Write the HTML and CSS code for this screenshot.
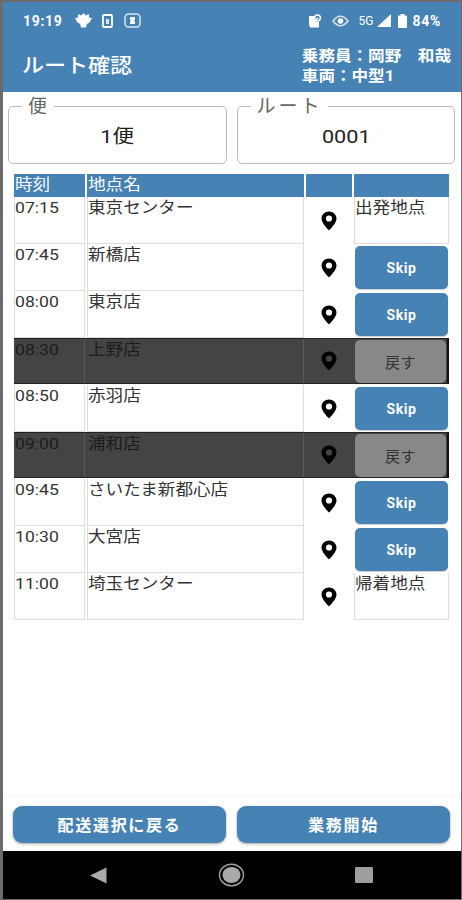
FILE: index.html
```html
<!DOCTYPE html>
<html lang="ja">
<head>
    <meta charset="UTF-8">
    <meta name="viewport" content="width=device-width, initial-scale=1.0">
    <title>ルート確認</title>
    <link rel="stylesheet" href="styles.css">
</head>
<body>
    <!-- 共通アイコン -->
    <svg class="icon-defs" width="0" height="0">
        <symbol id="pin" viewBox="0 0 16 20">
            <path fill-rule="evenodd" d="M8 0.5C3.8 0.5 0.5 3.7 0.5 7.6C0.5 12.5 8 19.5 8 19.5S15.5 12.5 15.5 7.6C15.5 3.7 12.2 0.5 8 0.5ZM8 4.4A3.1 3.1 0 1 1 8 10.6A3.1 3.1 0 1 1 8 4.4Z"/>
        </symbol>
    </svg>

    <div class="screen">
        <header class="header">
            <div class="status-bar">
                <span class="clock">19:19</span>
                <svg class="status-leaf" width="17" height="15" viewBox="0 0 17 15"><path fill="#fff" d="M8.5 0L10.800 2.500L14 1L14 4.500L17 5L14.500 9.500L11.800 11L11 14.500H6L5.200 11L2.500 9.500L0 5L3 4.500L3 1L6.200 2.500Z"/></svg>
                <svg class="status-card" width="11" height="14" viewBox="0 0 11 14"><rect x="1" y="1" width="9" height="12" rx="1" fill="none" stroke="#fff" stroke-width="1.8"/><path fill="#d7e6f2" d="M4 5h3v5H4z"/></svg>
                <svg class="status-box" width="17" height="15" viewBox="0 0 17 15"><rect x="1" y="1" width="15" height="13" rx="3.5" fill="none" stroke="#d7e6f2" stroke-width="1.5"/><path fill="#fff" d="M6 4h5v2.500l-1 1 1 1V11H6V8.500l1-1-1-1z"/></svg>
                <div class="status-right">
                    <svg width="14" height="14" viewBox="0 0 14 14"><path fill="#fff" d="M1 2h5v3l2 3h3v5.5H2L1 10z"/><circle cx="9.5" cy="4" r="2.9" fill="none" stroke="#fff" stroke-width="1.5"/><path d="M6 8l4-4" stroke="#fff" stroke-width="1.4"/></svg>
                    <svg class="status-eye" width="17" height="12" viewBox="0 0 17 12"><path fill="none" stroke="#d4e4f1" stroke-width="1.6" d="M1 6Q8.5-3.5 16 6Q8.5 15.500 1 6Z"/><circle cx="8.5" cy="6" r="2.8" fill="#fff"/></svg>
                    <span class="network">5G</span>
                    <svg class="status-signal" width="14" height="13" viewBox="0 0 14 13"><path fill="#fff" d="M0 13L14 0V13Z"/></svg>
                    <svg class="status-battery" width="9" height="14" viewBox="0 0 9 14"><path fill="#fff" d="M2.500 0h4v1.500H8.300q.7 0 .7.7V13.200q0 .8-.8.8H.8Q0 14 0 13.200V2.200q0-.7.7-.7H2.500z"/></svg>
                    <span class="battery">84%</span>
                </div>
            </div>
            <div class="title-bar">
                <h1 class="title">ルート確認</h1>
                <div class="crew">
                    <div>乗務員：岡野　和哉</div>
                    <div>車両：中型1</div>
                </div>
            </div>
        </header>

        <main class="content">
            <div class="fields">
                <fieldset class="field">
                    <legend class="legend-short">便</legend>
                    <div class="wide-center">1便</div>
                </fieldset>
                <fieldset class="field">
                    <legend class="legend-long">ルート</legend>
                    <div class="wide-center">0001</div>
                </fieldset>
            </div>

            <div class="route">
                <div class="row row-head">
                    <div class="cell"><span class="wide">時刻</span></div>
                    <div class="cell"><span class="wide">地点名</span></div>
                    <div class="cell"></div>
                    <div class="cell"></div>
                </div>
                <div class="row">
                    <div class="cell"><span class="wide">07:15</span></div>
                    <div class="cell"><span class="wide">東京センター</span></div>
                    <div class="map"><svg class="pin"><use href="#pin"/></svg></div>
                    <div class="cell"><span class="wide">出発地点</span></div>
                </div>
                <div class="row">
                    <div class="cell"><span class="wide">07:45</span></div>
                    <div class="cell"><span class="wide">新橋店</span></div>
                    <div class="map"><svg class="pin"><use href="#pin"/></svg></div>
                    <button class="skip-button">Skip</button>
                </div>
                <div class="row">
                    <div class="cell"><span class="wide">08:00</span></div>
                    <div class="cell"><span class="wide">東京店</span></div>
                    <div class="map"><svg class="pin"><use href="#pin"/></svg></div>
                    <button class="skip-button">Skip</button>
                </div>
                <div class="row skipped">
                    <div class="cell"><span class="wide">08:30</span></div>
                    <div class="cell"><span class="wide">上野店</span></div>
                    <div class="map"><svg class="pin"><use href="#pin"/></svg></div>
                    <button class="skip-button">戻す</button>
                </div>
                <div class="row">
                    <div class="cell"><span class="wide">08:50</span></div>
                    <div class="cell"><span class="wide">赤羽店</span></div>
                    <div class="map"><svg class="pin"><use href="#pin"/></svg></div>
                    <button class="skip-button">Skip</button>
                </div>
                <div class="row skipped">
                    <div class="cell"><span class="wide">09:00</span></div>
                    <div class="cell"><span class="wide">浦和店</span></div>
                    <div class="map"><svg class="pin"><use href="#pin"/></svg></div>
                    <button class="skip-button">戻す</button>
                </div>
                <div class="row">
                    <div class="cell"><span class="wide">09:45</span></div>
                    <div class="cell"><span class="wide">さいたま新都心店</span></div>
                    <div class="map"><svg class="pin"><use href="#pin"/></svg></div>
                    <button class="skip-button">Skip</button>
                </div>
                <div class="row">
                    <div class="cell"><span class="wide">10:30</span></div>
                    <div class="cell"><span class="wide">大宮店</span></div>
                    <div class="map"><svg class="pin"><use href="#pin"/></svg></div>
                    <button class="skip-button">Skip</button>
                </div>
                <div class="row">
                    <div class="cell"><span class="wide">11:00</span></div>
                    <div class="cell"><span class="wide">埼玉センター</span></div>
                    <div class="map"><svg class="pin"><use href="#pin"/></svg></div>
                    <div class="cell"><span class="wide">帰着地点</span></div>
                </div>
            </div>
        </main>

        <!-- 下部ボタン -->
        <footer class="footer">
            <button class="main-button">配送選択に戻る</button>
            <button class="main-button">業務開始</button>
        </footer>

        <nav class="nav-bar">
            <svg width="17" height="17" viewBox="0 0 17 17"><path fill="#aaa" d="M0 8.500L16.500 0.500V16.500Z"/></svg>
            <svg width="27" height="24" viewBox="0 0 27 24"><ellipse cx="13.500" cy="12" rx="12" ry="10.800" fill="none" stroke="#999" stroke-width="1.500"/><ellipse cx="13.500" cy="12" rx="9" ry="8" fill="#aaa"/></svg>
            <svg width="18" height="16" viewBox="0 0 18 16"><rect width="18" height="16" rx="1" fill="#9e9e9e"/></svg>
        </nav>
    </div>
</body>
</html>
```
FILE: styles.css
```css
* {
    box-sizing: border-box;
}
body {
    margin: 0;
    font-family: Roboto, "Noto Sans CJK JP", sans-serif;
    color: #333;
}
.icon-defs {
    position: absolute;
}
.screen {
    display: flex;
    flex-direction: column;
    height: 900px;
    width: 462px;
    background-color: #fff;
    border: 2px solid #6b6b6b;
    border-left-width: 3px;
    border-right-width: 1px;
    border-bottom-width: 1px;
    overflow: hidden;
}
.header {
    height: 90px;
    background-color: #4682b4;
    color: #fff;
}
.status-bar {
    display: flex;
    align-items: center;
    height: 36px;
    padding: 1px 20px 0 20px;
}
.clock {
    width: 52px;
    font-size: 14px;
    font-weight: 700;
    letter-spacing: 0.7px;
}
.status-card {
    margin-left: 10px;
}
.status-box {
    margin-left: 11px;
}
.status-right {
    display: flex;
    align-items: center;
    margin-left: auto;
}
.status-eye {
    margin-left: 10px;
    margin-right: 2px;
}
.network {
    margin-left: 8px;
    font-size: 12px;
}
.status-signal {
    margin-left: 4px;
}
.status-battery {
    margin-left: 7px;
}
.battery {
    margin-left: 5px;
    font-size: 14px;
    font-weight: 700;
    letter-spacing: 0.7px;
}
.title-bar {
    display: flex;
    justify-content: space-between;
    padding: 8px 9px 0 19px;
}
.title {
    margin: 5px 0 0;
    font-size: 20px;
    line-height: 30px;
    font-weight: 500;
    transform: scaleX(1.1);
    transform-origin: left;
}
.crew {
    font-size: 15px;
    line-height: 20px;
    font-weight: 700;
    transform: translateX(-1px) scaleX(1.105);
    transform-origin: right;
}
.content {
    flex: 1;
    padding: 1px 6px 0 5px;
}
.fields {
    display: flex;
    gap: 10px;
}
.field {
    flex: 1;
    min-width: 0;
    height: 71px;
    margin: 0;
    padding: 6px 0 0;
    border: 1px solid #bbb;
    border-radius: 5px;
    color: #222;
    font-size: 19px;
}
.field legend {
    margin-left: 13px;
    padding: 0 0 0 6px;
    height: 26px;
    line-height: 27px;
    font-size: 19px;
    color: #666;
}
.field .legend-short {
    width: 32px;
}
.field .legend-long {
    width: 77px;
    letter-spacing: 3px;
}
.wide-center {
    line-height: 23px;
    text-align: center;
    transform: scaleX(1.14);
}
.route {
    margin: 10px 0 0 6px;
    width: 435px;
}
.row {
    display: grid;
    grid-template-columns: 71px 217px 46px 95px;
    column-gap: 2px;
    height: 47px;
}
.cell {
    border: 1px solid #ddd;
    border-top: none;
    font-size: 15.5px;
    line-height: 23px;
    white-space: nowrap;
}
.wide {
    display: inline-block;
    transform: scaleX(1.135);
    transform-origin: left;
}
.row-head {
    height: 23px;
    padding-bottom: 1px;
    color: #fff;
}
.row-head .cell {
    border: none;
    background-color: #4682b4;
    padding-left: 1px;
}
.map {
    display: flex;
    align-items: center;
    justify-content: center;
}
.pin {
    width: 16px;
    height: 20px;
    fill: #000;
}
.skip-button {
    margin: 2px 1px;
    border: none;
    border-radius: 5px;
    background-color: #4682b4;
    box-shadow: 0 1px 1px rgba(0, 0, 0, 0.2);
    color: #fff;
    font-family: inherit;
    font-size: 14px;
    font-weight: 700;
    letter-spacing: 0.6px;
}
.skipped {
    height: 46px;
    margin-bottom: 1px;
    background-color: #444;
    color: #1c1c1c;
    border-top: 1px solid #222;
    border-right: 2px solid #111;
    border-bottom: 1px solid #222;
}
.skipped .cell {
    border: none;
    border-right: 1px solid #5a5a5a;
    padding-left: 1px;
    line-height: 22px;
}
.skipped .skip-button {
    margin: 1px 3px 0 1px;
    background-color: #888;
    box-shadow: none;
    color: #333;
    font-weight: 400;
    font-size: 15px;
}
.footer {
    display: flex;
    gap: 11px;
    height: 56px;
    padding: 10px 11px 8px 10px;
    border-top: 1px solid #f5f5f5;
}
.main-button {
    flex: 1;
    height: 37px;
    padding: 0 0 2px;
    border: none;
    border-radius: 9px;
    background-color: #4682b4;
    box-shadow: 0 1px 3px rgba(0, 0, 0, 0.35);
    color: #fff;
    font-family: inherit;
    font-size: 16px;
    font-weight: 700;
    letter-spacing: 1.7px;
}
.nav-bar {
    display: flex;
    align-items: center;
    justify-content: space-between;
    height: 48px;
    padding: 0 88px 0 87px;
    background-color: #000;
}
```
